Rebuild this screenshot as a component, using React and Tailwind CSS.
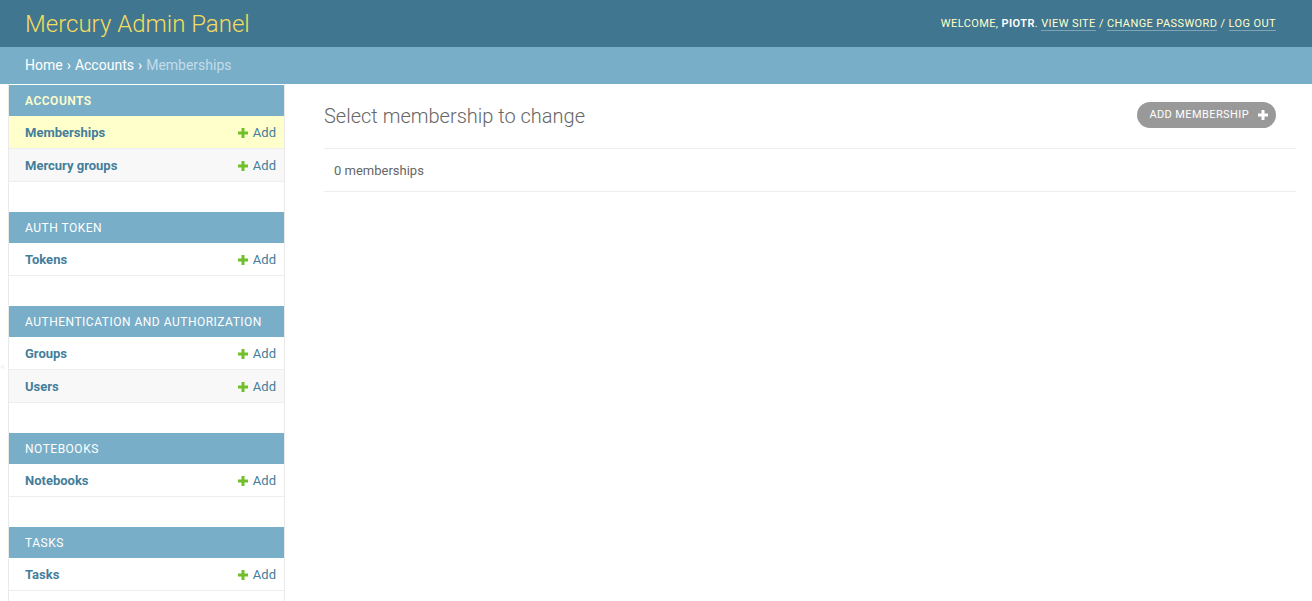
import React from "react";

const Plus = ({ className = "" }) => (
  <svg width="10" height="10" viewBox="0 0 10 10" className={className}>
    <rect x="3.5" y="0" width="3" height="10" fill="currentColor" />
    <rect x="0" y="3.5" width="10" height="3" fill="currentColor" />
  </svg>
);

const modules = [
  { name: "Accounts", current: true, models: ["Memberships", "Mercury groups"] },
  { name: "Auth Token", models: ["Tokens"] },
  { name: "Authentication and Authorization", models: ["Groups", "Users"] },
  { name: "Notebooks", models: ["Notebooks"] },
  { name: "Tasks", models: ["Tasks"] },
];

function Module({ m }) {
  return (
    <div className="mb-[30px]">
      <div
        className={
          "h-[31px] flex items-center pl-[16px] bg-[#79aec8] text-[12px] uppercase tracking-[0.5px] " +
          (m.current ? "text-[#ffc] font-semibold" : "text-white")
        }
      >
        {m.name}
      </div>
      {m.models.map((name, i) => {
        const bg =
          m.current && i === 0 ? "bg-[#ffc]" : i % 2 === 1 ? "bg-[#f8f8f8]" : "bg-white";
        return (
          <div
            key={name}
            className={
              "h-[33px] flex items-center justify-between pl-[16px] pr-[8px] pt-[1px] border-b border-[#eee] text-[13px] " +
              bg
            }
          >
            <span className="font-bold text-[#447e9b]">{name}</span>
            <span className="flex items-center gap-[5px] text-[#447e9b]">
              <Plus className="text-[#70bf2b]" />
              Add
            </span>
          </div>
        );
      })}
    </div>
  );
}

export default function App() {
  return (
    <div
      className="w-[1312px] h-[601px] overflow-hidden bg-white flex flex-col"
      style={{ fontFamily: "Roboto, 'Liberation Sans', sans-serif" }}
    >
      <header className="h-[47px] shrink-0 bg-[#417690] flex items-center justify-between pl-[25px] pr-[36px]">
        <div className="text-[24px] font-light text-[#f5dd5d] leading-none">
          Mercury Admin Panel
        </div>
        <div className="text-[11px] uppercase tracking-[0.4px] text-[#ffc] pt-[1px]">
          Welcome, <strong className="font-semibold text-[#fff]">Piotr</strong>.{" "}
          <span className="border-b border-[#ffffff55] text-[#ffc]">View site</span> /{" "}
          <span className="border-b border-[#ffffff55] text-[#ffc]">Change password</span> /{" "}
          <span className="border-b border-[#ffffff55] text-[#ffc]">Log out</span>
        </div>
      </header>
      <div className="h-[37px] shrink-0 bg-[#79aec8] flex items-center pl-[25px] text-[14px] text-white">
        <span>Home</span>
        <span className="mx-[4px]">›</span>
        <span>Accounts</span>
        <span className="mx-[4px]">›</span>
        <span className="text-[#c4dce8]">Memberships</span>
      </div>
      <div className="flex flex-1 min-h-0">
        <div className="w-[9px] shrink-0 border-r border-[#eaeaea] relative">
          <span className="absolute left-0 top-[275px] text-[10px] text-[#b9e6f0] opacity-40">«</span>
        </div>
        <nav className="w-[276px] shrink-0 border-r border-[#eaeaea] pt-[1px]">
          {modules.map((m) => (
            <Module key={m.name} m={m} />
          ))}
        </nav>
        <main className="flex-1 pl-[39px] pr-[16px] pt-[20px]">
          <div className="flex items-center justify-between h-[24px] mb-[20px]">
            <h1 className="text-[20px] font-light text-[#666] leading-[24px]">
              Select membership to change
            </h1>
            <div className="mr-[20px] mb-[2px] h-[26px] rounded-full bg-[#999] flex items-center pl-[12px] pr-[8px] gap-[9px] text-[11px] uppercase tracking-[0.4px] text-white">
              Add membership
              <Plus className="text-white" />
            </div>
          </div>
          <div className="border-t border-b border-[#eee] h-[44px] flex items-center pl-[10px] pt-[1px] text-[13px] text-[#666]">
            0 memberships
          </div>
        </main>
      </div>
    </div>
  );
}
